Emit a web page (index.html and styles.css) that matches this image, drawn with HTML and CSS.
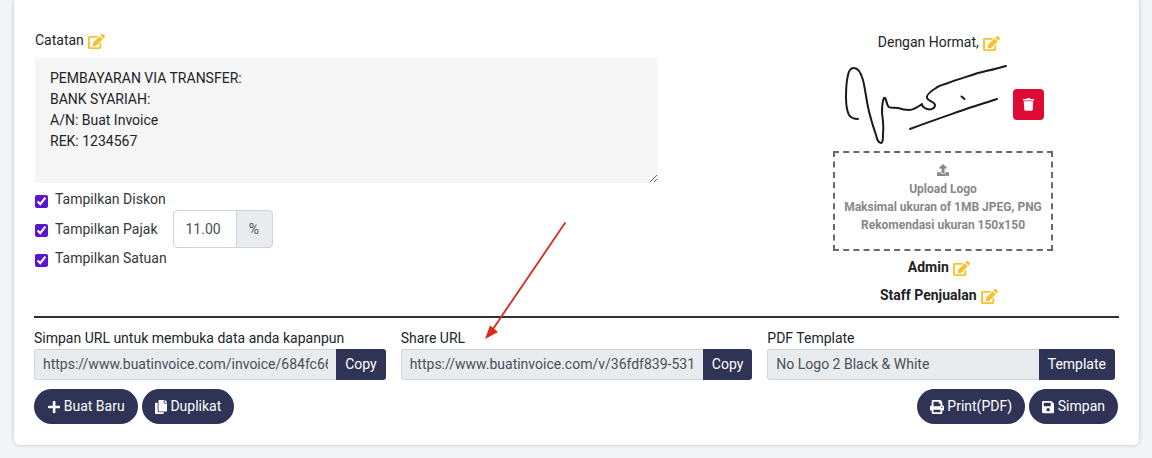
FILE: index.html
```html
<!DOCTYPE html>
<html lang="id">
<head>
<meta charset="utf-8">
<title>Buat Invoice</title>
<link rel="stylesheet" href="styles.css">
</head>
<body>
<svg width="0" height="0" class="defs">
  <symbol id="i-edit" viewBox="0 0 576 512"><path d="M402.6 83.2l90.2 90.2c3.8 3.8 3.8 10 0 13.8L274.4 405.6l-92.8 10.3c-12.4 1.4-22.9-9.1-21.5-21.5l10.3-92.8L388.8 83.2c3.8-3.8 10-3.8 13.8 0zm162-22.9l-48.8-48.8c-15.2-15.2-39.9-15.2-55.2 0l-35.4 35.4c-3.8 3.8-3.8 10 0 13.8l90.2 90.2c3.8 3.8 10 3.8 13.8 0l35.4-35.4c15.2-15.3 15.2-40 0-55.2zM384 346.2V448H64V128h229.8c3.2 0 6.2-1.3 8.5-3.5l40-40c7.6-7.6 2.2-20.5-8.5-20.5H48C21.5 64 0 85.5 0 112v352c0 26.5 21.5 48 48 48h352c26.5 0 48-21.5 48-48V306.2c0-10.7-12.9-16-20.5-8.5l-40 40c-2.2 2.3-3.5 5.3-3.5 8.5z"/></symbol>
</svg>
<main class="card">
  <section class="top">
    <div class="notes">
      <div class="label-line">Catatan <svg class="edit"><use href="#i-edit"/></svg></div>
      <textarea class="note-area" readonly>PEMBAYARAN VIA TRANSFER:
BANK SYARIAH:
A/N: Buat Invoice
REK: 1234567</textarea>
      <label class="check-row"><input class="cb" type="checkbox" checked>Tampilkan Diskon</label>
      <div class="check-row tax">
        <label class="check-inner"><input class="cb" type="checkbox" checked>Tampilkan Pajak</label>
        <div class="tax-group"><input class="tax-input" type="text" value="11.00" readonly><span class="tax-addon">%</span></div>
      </div>
      <label class="check-row"><input class="cb" type="checkbox" checked>Tampilkan Satuan</label>
    </div>
    <div class="sign">
      <div class="label-line shifted">Dengan Hormat, <svg class="edit"><use href="#i-edit"/></svg></div>
      <div class="sign-row">
        <svg class="signature" viewBox="838 62 170 85" fill="none" stroke="#1a1a1a" stroke-width="2" stroke-linecap="round" stroke-linejoin="round">
          <path d="M1005 66C995 69 985 71 977 73C965 77 955 80 947 83C941 85 937 86 935 88C930 91 925 95 926 98C927 101 934 102 934 105C934 109 929 110 926 109C923 108 921 106 921 104C917 107 912 110 908 110C903 110 900 109 897 108C892 107 888 109 887 106C885 102 885 97 883 98C881 102 881 108 881 113C882 121 883 127 882 133C882 138 882 143 880 143C877 143 876 139 875 135C872 126 869 117 867 107C865 97 864 88 862 80C860 73 857 68 853 68C849 68 848 71 847 75C845 83 845 90 845 97C845 105 846 111 848 115C850 118 853 119 857 119"/>
          <path d="M909 129C930 121 948 115 965 109C977 105 987 102 996 99"/>
          <path d="M960.5 96.500L963.500 99"/>
        </svg>
        <button class="trash" type="button" aria-label="Hapus"><svg viewBox="0 0 448 512"><path d="M432 32H312l-9.4-18.7A24 24 0 0 0 281.1 0H166.8a23.72 23.72 0 0 0-21.4 13.3L136 32H16A16 16 0 0 0 0 48v32a16 16 0 0 0 16 16h416a16 16 0 0 0 16-16V48a16 16 0 0 0-16-16zM53.2 467a48 48 0 0 0 47.9 45h245.8a48 48 0 0 0 47.9-45L416 128H32z"/></svg></button>
      </div>
      <div class="upload">
        <svg class="upload-icon" viewBox="0 0 512 512"><path d="M296 384h-80c-13.3 0-24-10.7-24-24V192h-87.7c-17.8 0-26.7-21.5-14.1-34.1L242.3 5.7c7.5-7.5 19.8-7.5 27.3 0l152.2 152.2c12.6 12.6 3.7 34.1-14.1 34.1H320v168c0 13.3-10.7 24-24 24zm216-8v112c0 13.3-10.7 24-24 24H24c-13.3 0-24-10.7-24-24V376c0-13.3 10.7-24 24-24h136v8c0 30.9 25.1 56 56 56h80c30.9 0 56-25.1 56-56v-8h136c13.3 0 24 10.7 24 24zm-124 88c0-11-9-20-20-20s-20 9-20 20 9 20 20 20 20-9 20-20zm64 0c0-11-9-20-20-20s-20 9-20 20 9 20 20 20 20-9 20-20z"/></svg>
        <div>Upload Logo</div>
        <div>Maksimal ukuran of 1MB JPEG, PNG</div>
        <div>Rekomendasi ukuran 150x150</div>
      </div>
      <div class="person first shifted">Admin <svg class="edit"><use href="#i-edit"/></svg></div>
      <div class="person shifted">Staff Penjualan <svg class="edit"><use href="#i-edit"/></svg></div>
    </div>
  </section>
  <hr class="rule">
  <section class="urls">
    <div class="field">
      <div class="field-label">Simpan URL untuk membuka data anda kapanpun</div>
      <div class="field-group"><input class="field-input" type="text" readonly value="https://www.buatinvoice.com/invoice/684fc66e2b1a4"><button class="field-btn" type="button">Copy</button></div>
    </div>
    <div class="field">
      <div class="field-label">Share URL</div>
      <div class="field-group"><input class="field-input" type="text" readonly value="https://www.buatinvoice.com/v/36fdf839-5317-4a2e"><button class="field-btn" type="button">Copy</button></div>
    </div>
    <div class="field narrow">
      <div class="field-label">PDF Template</div>
      <div class="field-group"><input class="field-input" type="text" readonly value="No Logo 2 Black &amp; White"><button class="field-btn" type="button">Template</button></div>
    </div>
  </section>
  <section class="actions">
    <div class="action-set">
      <button class="pill pill-plus" type="button"><svg viewBox="0 0 448 512"><path d="M416 208H272V64c0-17.67-14.33-32-32-32h-32c-17.67 0-32 14.33-32 32v144H32c-17.67 0-32 14.33-32 32v32c0 17.67 14.33 32 32 32h144v144c0 17.67 14.33 32 32 32h32c17.67 0 32-14.33 32-32V304h144c17.67 0 32-14.33 32-32v-32c0-17.67-14.33-32-32-32z"/></svg>Buat Baru</button>
      <button class="pill" type="button"><svg viewBox="0 0 448 512"><path d="M320 448v40c0 13.255-10.745 24-24 24H24c-13.255 0-24-10.745-24-24V120c0-13.255 10.745-24 24-24h72v296c0 30.879 25.121 56 56 56h168zm0-344V0H152c-13.255 0-24 10.745-24 24v368c0 13.255 10.745 24 24 24h272c13.255 0 24-10.745 24-24V128H344c-13.2 0-24-10.8-24-24zm120.971-31.029L375.029 7.029A24 24 0 0 0 358.059 0H352v96h96v-6.059a24 24 0 0 0-7.029-16.97z"/></svg>Duplikat</button>
    </div>
    <div class="action-set">
      <button class="pill pill-print" type="button"><svg viewBox="0 0 512 512"><path d="M448 192V77.25c0-8.49-3.37-16.62-9.37-22.63L393.37 9.37c-6-6-14.14-9.37-22.63-9.37H96C78.33 0 64 14.33 64 32v160c-35.35 0-64 28.65-64 64v112c0 8.84 7.16 16 16 16h48v96c0 17.67 14.33 32 32 32h320c17.67 0 32-14.33 32-32v-96h48c8.84 0 16-7.16 16-16V256c0-35.35-28.65-64-64-64zm-64 256H128v-96h256v96zm0-224H128V64h192v48c0 8.84 7.16 16 16 16h48v96zm48 72c-13.25 0-24-10.75-24-24 0-13.26 10.75-24 24-24s24 10.74 24 24c0 13.25-10.75 24-24 24z"/></svg>Print(PDF)</button>
      <button class="pill" type="button"><svg viewBox="0 0 448 512"><path d="M433.941 129.941l-83.882-83.882A48 48 0 0 0 316.118 32H48C21.49 32 0 53.49 0 80v352c0 26.51 21.49 48 48 48h352c26.51 0 48-21.49 48-48V163.882a48 48 0 0 0-14.059-33.941zM224 416c-35.346 0-64-28.654-64-64 0-35.346 28.654-64 64-64s64 28.654 64 64c0 35.346-28.654 64-64 64zm96-304.52V212c0 6.627-5.373 12-12 12H76c-6.627 0-12-5.373-12-12V108c0-6.627 5.373-12 12-12h228.52c3.183 0 6.235 1.264 8.485 3.515l3.48 3.48A11.996 11.996 0 0 1 320 111.48z"/></svg>Simpan</button>
    </div>
  </section>
  <svg class="arrow" viewBox="0 0 90 125" fill="#dd2a1b" stroke="none">
    <path d="M81 1L9 107" stroke="#dd2a1b" stroke-width="1.8" fill="none" stroke-linecap="round"/>
    <path d="M1 117L6 103.500L14 110Z"/>
  </svg>
</main>
</body>
</html>
```
FILE: styles.css
```css
* { box-sizing: border-box; }
html, body { margin: 0; padding: 0; }
body {
  height: 458px;
  overflow: hidden;
  background: #f3f5f9;
  font-family: Roboto, "Liberation Sans", sans-serif;
  font-size: 14px;
  line-height: 21px;
  color: #212529;
}
.defs { position: absolute; }
.card {
  position: relative;
  margin: 0 13px 0 14px;
  height: 445px;
  padding: 30px 20px 0;
  background: #fff;
  border-radius: 0 0 6px 6px;
  box-shadow: 0 0 4px rgba(60, 64, 90, .3);
}
.edit { width: 17px; height: 15px; margin-left: 1px; fill: #f5c22e; vertical-align: -4px; }
.top { display: flex; justify-content: space-between; height: 286px; }
.notes { width: 624px; margin-left: 1px; }
.label-line { height: 21px; }
.note-area {
  display: block;
  width: 623px;
  height: 125px;
  margin: 7px 0 6px;
  padding: 10px 15px;
  border: 0;
  background: #f6f6f6;
  outline: 0;
  font: inherit;
  line-height: 21px;
  color: #212529;
}
.check-row { display: flex; align-items: center; height: 21px; color: #33363b; }
.cb {
  width: 13px;
  height: 13px;
  margin: 3px 7px 0 0;
  accent-color: #5a14d2;
}
.check-row.tax { height: 38px; }
.check-inner { display: flex; align-items: center; }
.tax-group { display: flex; height: 38px; margin-left: 15px; }
.tax-input {
  width: 64px;
  padding: 0 12px;
  border: 1px solid #ced4da;
  border-radius: 4px 0 0 4px;
  font: inherit;
  color: #495057;
  outline: 0;
}
.tax-addon {
  display: flex;
  align-items: center;
  justify-content: center;
  width: 37px;
  margin-left: -1px;
  border: 1px solid #ced4da;
  border-radius: 0 4px 4px 0;
  background: #e9ecef;
  color: #495057;
}
.sign {
  display: flex;
  flex-direction: column;
  align-items: center;
  width: 352px;
  margin-top: 2px;
}
.shifted { margin-right: 8px; }
.sign-row { display: flex; align-items: center; gap: 4px; height: 85px; margin: 9px 4px 0 0; }
.signature { width: 170px; height: 85px; }
.trash {
  display: flex;
  align-items: center;
  justify-content: center;
  width: 31px;
  height: 31px;
  padding: 0;
  border: 0;
  border-radius: 4px;
  background: #df0a35;
}
.trash svg { width: 11px; height: 13px; fill: #fff; }
.upload {
  display: flex;
  flex-direction: column;
  align-items: center;
  width: 220px;
  height: 100px;
  margin-top: 4px;
  padding-top: 11px;
  border: 2px dashed #666a70;
  font-size: 12px;
  font-weight: 700;
  line-height: 18px;
  color: #85888d;
}
.upload-icon { width: 12px; height: 12px; fill: #85888d; margin-bottom: 4px; }
.person { font-weight: 700; height: 21px; color: #1f2226; }
.person.first { margin-top: 6px; margin-bottom: 7px; }
.rule { height: 2px; margin: 0; border: 0; background: #2c2f3e; }
.urls { display: grid; grid-template-columns: repeat(3, 1fr); gap: 15px; margin-top: 10px; }
.field-label { height: 21px; }
.field-group { display: flex; height: 31px; }
.narrow .field-group { margin-right: 4px; }
.field-input {
  flex: 1;
  min-width: 0;
  padding: 0 8px;
  border: 1px solid #ced4da;
  border-right: 0;
  border-radius: 3px 0 0 3px;
  background: #e9ecef;
  font: inherit;
  color: #495057;
  outline: 0;
}
.field-btn {
  padding: 0 9px;
  border: 0;
  border-radius: 0 3px 3px 0;
  background: #2f3356;
  color: #fff;
  font: inherit;
}
.actions { display: flex; justify-content: space-between; margin-top: 9px; padding-right: 1px; }
.action-set { display: flex; gap: 4px; }
.pill {
  display: flex;
  align-items: center;
  gap: 3.5px;
  height: 35px;
  padding: 0 13px;
  border: 0;
  border-radius: 18px;
  background: #2f3356;
  color: #fff;
  font: inherit;
}
.pill svg { width: 12.25px; height: 14px; fill: #fff; }
.pill-plus { padding-left: 14px; }
.pill-print svg { width: 14px; }
.arrow { position: absolute; left: 470px; top: 222px; width: 90px; height: 125px; }
```
